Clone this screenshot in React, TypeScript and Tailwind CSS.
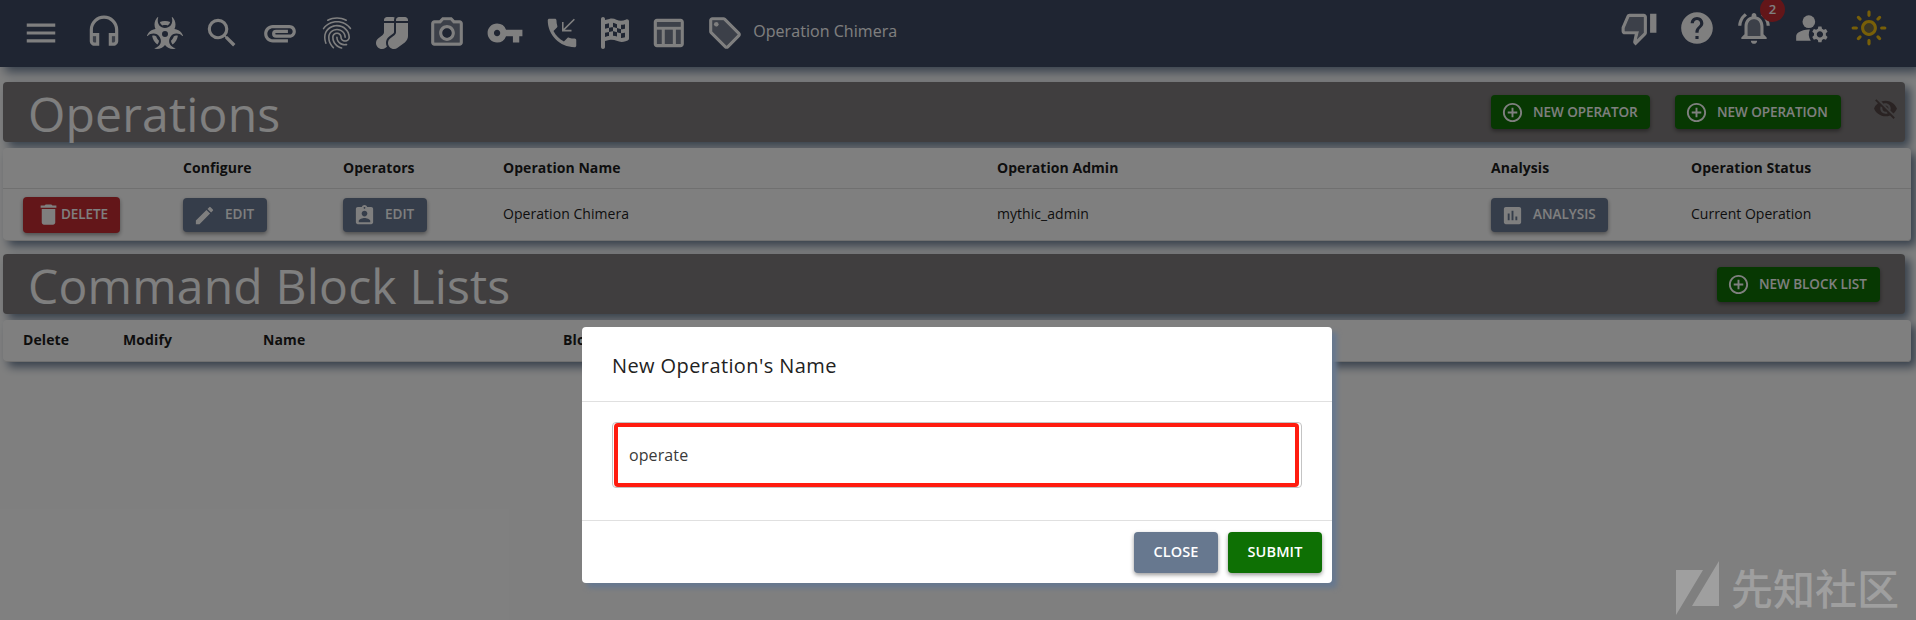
import type { ReactNode } from "react";
import type { IconType } from "react-icons";
import {
  MdAddCircleOutline,
  MdAssessment,
  MdAssignmentInd,
  MdAttachment,
  MdDelete,
  MdEdit,
  MdFingerprint,
  MdHelp,
  MdManageAccounts,
  MdMenu,
  MdOutlineCameraAlt,
  MdOutlineHeadset,
  MdOutlineLightMode,
  MdOutlineLocalOffer,
  MdOutlineNotificationsActive,
  MdOutlineTableChart,
  MdOutlineThumbDown,
  MdPhoneCallback,
  MdSearch,
  MdVisibilityOff,
  MdVpnKey,
} from "react-icons/md";
import { FaBiohazard, FaFlagCheckered, FaSocks } from "react-icons/fa6";

const ICON = 38;

// Outlined icon with a translucent fill behind its strokes.
function TwoTone({ icon: Icon, fill }: { icon: IconType; fill: string }) {
  return (
    <svg viewBox="0 0 24 24" width={ICON} height={ICON} fill="currentColor" className="flex-none">
      <path d={fill} fillRule="evenodd" opacity={0.3} />
      <Icon size={24} />
    </svg>
  );
}

const FILLS = {
  headset: "M5 14h2v5H5zM17 14h2v5h-2z",
  camera:
    "M20 6h-4.05l-1.83-2H9.88L8.05 6H4v12h16V6zm-8 11c-2.76 0-5-2.24-5-5s2.24-5 5-5 5 2.24 5 5-2.24 5-5 5z",
  table: "M5 5h15v3H5zM5 10h3v9H5zM10 10h5v9h-5zM17 10h3v9h-3z",
  tag: "M11 4H4v7l9 9.01L20 13l-9-9zM6.5 8C5.67 8 5 7.33 5 6.5S5.67 5 6.5 5 8 5.67 8 6.5 7.33 8 6.5 8z",
  thumb: "M3 12v2h9l-1.34 5.34L15 15V5H6l-3 7z",
  bell: "M12 6.5c-2.49 0-4 2.02-4 4.5v6h8v-6c0-2.48-1.51-4.5-4-4.5z",
  sun: "M12 9a3 3 0 1 0 0 6 3 3 0 1 0 0-6z",
};

function TopBar() {
  return (
    <header className="relative flex h-[67px] items-center justify-between bg-[#3e4a64] pr-7 pl-[21.5px] text-white shadow-[5px_5px_10px_#708299]">
      <div className="mb-px flex items-center gap-[19.7px]">
        <MdMenu size={ICON} />
        <div className="mr-[5px] ml-[5.5px]">
          <TwoTone icon={MdOutlineHeadset} fill={FILLS.headset} />
        </div>
        <FaBiohazard className="h-8 w-9" />
        <MdSearch size={ICON} />
        <MdAttachment size={ICON} />
        <MdFingerprint size={ICON} />
        <FaSocks className="h-8 w-8" />
        <TwoTone icon={MdOutlineCameraAlt} fill={FILLS.camera} />
        <MdVpnKey size={ICON} />
        <MdPhoneCallback size={ICON} />
        <FaFlagCheckered className="h-8 w-7" />
        <TwoTone icon={MdOutlineTableChart} fill={FILLS.table} />
        <div className="flex items-center gap-[9px]">
          <TwoTone icon={MdOutlineLocalOffer} fill={FILLS.tag} />
          <span className="-mt-1 text-base tracking-[0.05px]">Operation Chimera</span>
        </div>
      </div>
      <div className="mb-[11px] flex items-center gap-[19.5px]">
        <TwoTone icon={MdOutlineThumbDown} fill={FILLS.thumb} />
        <MdHelp size={ICON} />
        <div className="relative">
          <TwoTone icon={MdOutlineNotificationsActive} fill={FILLS.bell} />
          <span className="absolute -top-[12px] -right-[12px] flex h-[25px] w-[25px] items-center justify-center rounded-full bg-[#c62c33] text-[13px] font-semibold">
            2
          </span>
        </div>
        <MdManageAccounts size={ICON} />
        <div className="text-[#f0bf10]">
          <TwoTone icon={MdOutlineLightMode} fill={FILLS.sun} />
        </div>
      </div>
    </header>
  );
}

function ActionButton({ icon: Icon, className, children }: { icon: IconType; className: string; children: ReactNode }) {
  return (
    <button
      className={`flex flex-none items-center rounded pl-[10px] text-[13.5px] font-semibold whitespace-nowrap text-white shadow-[0_2px_4px_rgba(0,0,0,0.4)] ${className}`}
    >
      <Icon size={23} className="mr-[9px] flex-none" />
      <span>{children}</span>
    </button>
  );
}

function Banner({ title, children }: { title: string; children: ReactNode }) {
  return (
    <div className="relative mr-[11px] ml-[3px] flex h-[60px] items-center justify-between rounded bg-[#817d7e] shadow-[5px_5px_10px_#708299]">
      <h3 className="pt-[4px] pl-[25px] text-[48px] leading-[56px] tracking-[0.2px] text-white">{title}</h3>
      {children}
    </div>
  );
}

const CARD = "relative mr-[5px] ml-[3px] rounded bg-white text-sm text-[#1c1c1c] shadow-[5px_5px_10px_#708299]";
const OPS_GRID = "grid grid-cols-[160px_160px_160px_494px_494px_200px_1fr] items-center border-b border-[#e0e0e0] *:pl-5";

function OperationsTable() {
  return (
    <div className={`mt-1.5 ${CARD}`}>
      <div className={`h-[41px] pb-px font-bold tracking-[0.05px] text-[#1c1c1c] ${OPS_GRID}`}>
        <span />
        <span>Configure</span>
        <span>Operators</span>
        <span>Operation Name</span>
        <span>Operation Admin</span>
        <span>Analysis</span>
        <span>Operation Status</span>
      </div>
      <div className={`h-[52px] rounded-b ${OPS_GRID}`}>
        <div>
          <button className="flex h-9 w-[97px] items-center rounded bg-[#c62c33] pl-3 text-[13.5px] font-semibold tracking-[-0.1px] text-white shadow-[0_2px_4px_rgba(0,0,0,0.4)]">
            <MdDelete size={27} className="flex-none" />
            <span className="-ml-px pt-px">DELETE</span>
          </button>
        </div>
        <div>
          <ActionButton icon={MdEdit} className="h-[34px] w-[84px] bg-[#6b7a94] pt-px">
            EDIT
          </ActionButton>
        </div>
        <div>
          <ActionButton icon={MdAssignmentInd} className="h-[34px] w-[84px] bg-[#6b7a94] pt-px">
            EDIT
          </ActionButton>
        </div>
        <span className="-mt-px tracking-[0.05px]">Operation Chimera</span>
        <span className="-mt-px tracking-[0.05px]">mythic_admin</span>
        <div>
          <ActionButton icon={MdAssessment} className="h-[34px] w-[117px] bg-[#6b7a94] pt-px">
            ANALYSIS
          </ActionButton>
        </div>
        <span className="-mt-px">Current Operation</span>
      </div>
    </div>
  );
}

function BlockListTable() {
  return (
    <div className={`mt-1.5 ${CARD}`}>
      <div className="grid h-[42px] grid-cols-[100px_140px_300px_1fr] items-center rounded-b border-b border-[#e0e0e0] pb-[2px] font-bold tracking-[0.1px] text-[#1c1c1c] *:pl-5">
        <span>Delete</span>
        <span>Modify</span>
        <span>Name</span>
        <span>Blocks</span>
      </div>
    </div>
  );
}

function NewOperationDialog() {
  return (
    <div className="mr-[2px] flex h-[256px] w-[750px] flex-col rounded bg-white shadow-[5px_5px_5px_#67788f]">
      <h2 className="flex h-[75px] flex-none items-center border-b border-[#e0e0e0] pt-[3px] pl-[30px] text-xl font-medium tracking-[0.4px] text-[#222]">
        New Operation's Name
      </h2>
      <div className="h-[118px] flex-none px-[30px] pt-5">
        <div className="h-[66px] rounded border border-[#c4c4c4] pt-0 pr-[2px] pl-px">
          <div className="flex h-16 items-center rounded border-4 border-[#ff1c0f] pl-[11px] text-base tracking-[0.1px] text-[#3a3a3a]">
            <span>operate</span>
          </div>
        </div>
      </div>
      <div className="flex flex-1 items-center justify-end gap-[10px] border-t border-[#e0e0e0] pt-px pr-[10px] text-[14.5px] font-semibold tracking-[0.1px] text-white">
        <button className="h-[41px] w-[84px] rounded bg-[#67788f] pb-px shadow-[0_2px_4px_rgba(0,0,0,0.4)]">CLOSE</button>
        <button className="h-[41px] w-[94px] rounded bg-[#0e7004] pb-px shadow-[0_2px_4px_rgba(0,0,0,0.4)]">SUBMIT</button>
      </div>
    </div>
  );
}

function Watermark() {
  return (
    <div className="absolute right-[18px] bottom-0 flex h-[62px] items-center gap-[12px] text-white/25">
      <svg width="43" height="55" viewBox="0 0 43 55" fill="currentColor" className="mb-[1px]">
        <path d="M0 9h27L0 54zM43 0v45H16z" />
      </svg>
      <span className="-mr-px mb-[5px] text-[42px] leading-[57px] font-medium font-['Noto_Sans_CJK_SC',sans-serif]">
        先知社区
      </span>
    </div>
  );
}

export default function App() {
  return (
    <div className="relative h-[620px] w-full overflow-hidden bg-white font-['Open_Sans','Noto_Sans',sans-serif]">
      <TopBar />
      <main className="pt-[15px]">
        <Banner title="Operations">
          <div className="flex items-center pr-[7px]">
            <ActionButton icon={MdAddCircleOutline} className="mr-[25px] h-[34px] w-[159px] bg-[#0e7004] tracking-[-0.05px]">
              NEW OPERATOR
            </ActionButton>
            <ActionButton icon={MdAddCircleOutline} className="mr-[32px] h-[34px] w-[166px] bg-[#0e7004] tracking-[-0.05px]">
              NEW OPERATION
            </ActionButton>
            <MdVisibilityOff size={25} className="mb-2 text-[#544646]" />
          </div>
        </Banner>
        <OperationsTable />
        <div className="h-[13px]" />
        <Banner title="Command Block Lists">
          <ActionButton icon={MdAddCircleOutline} className="mr-[25px] h-[35px] w-[163px] bg-[#0e7004] tracking-[-0.05px]">
            NEW BLOCK LIST
          </ActionButton>
        </Banner>
        <BlockListTable />
      </main>
      <div className="absolute inset-0 flex items-start justify-center bg-black/50 pt-[327px]">
        <NewOperationDialog />
        <Watermark />
      </div>
    </div>
  );
}
